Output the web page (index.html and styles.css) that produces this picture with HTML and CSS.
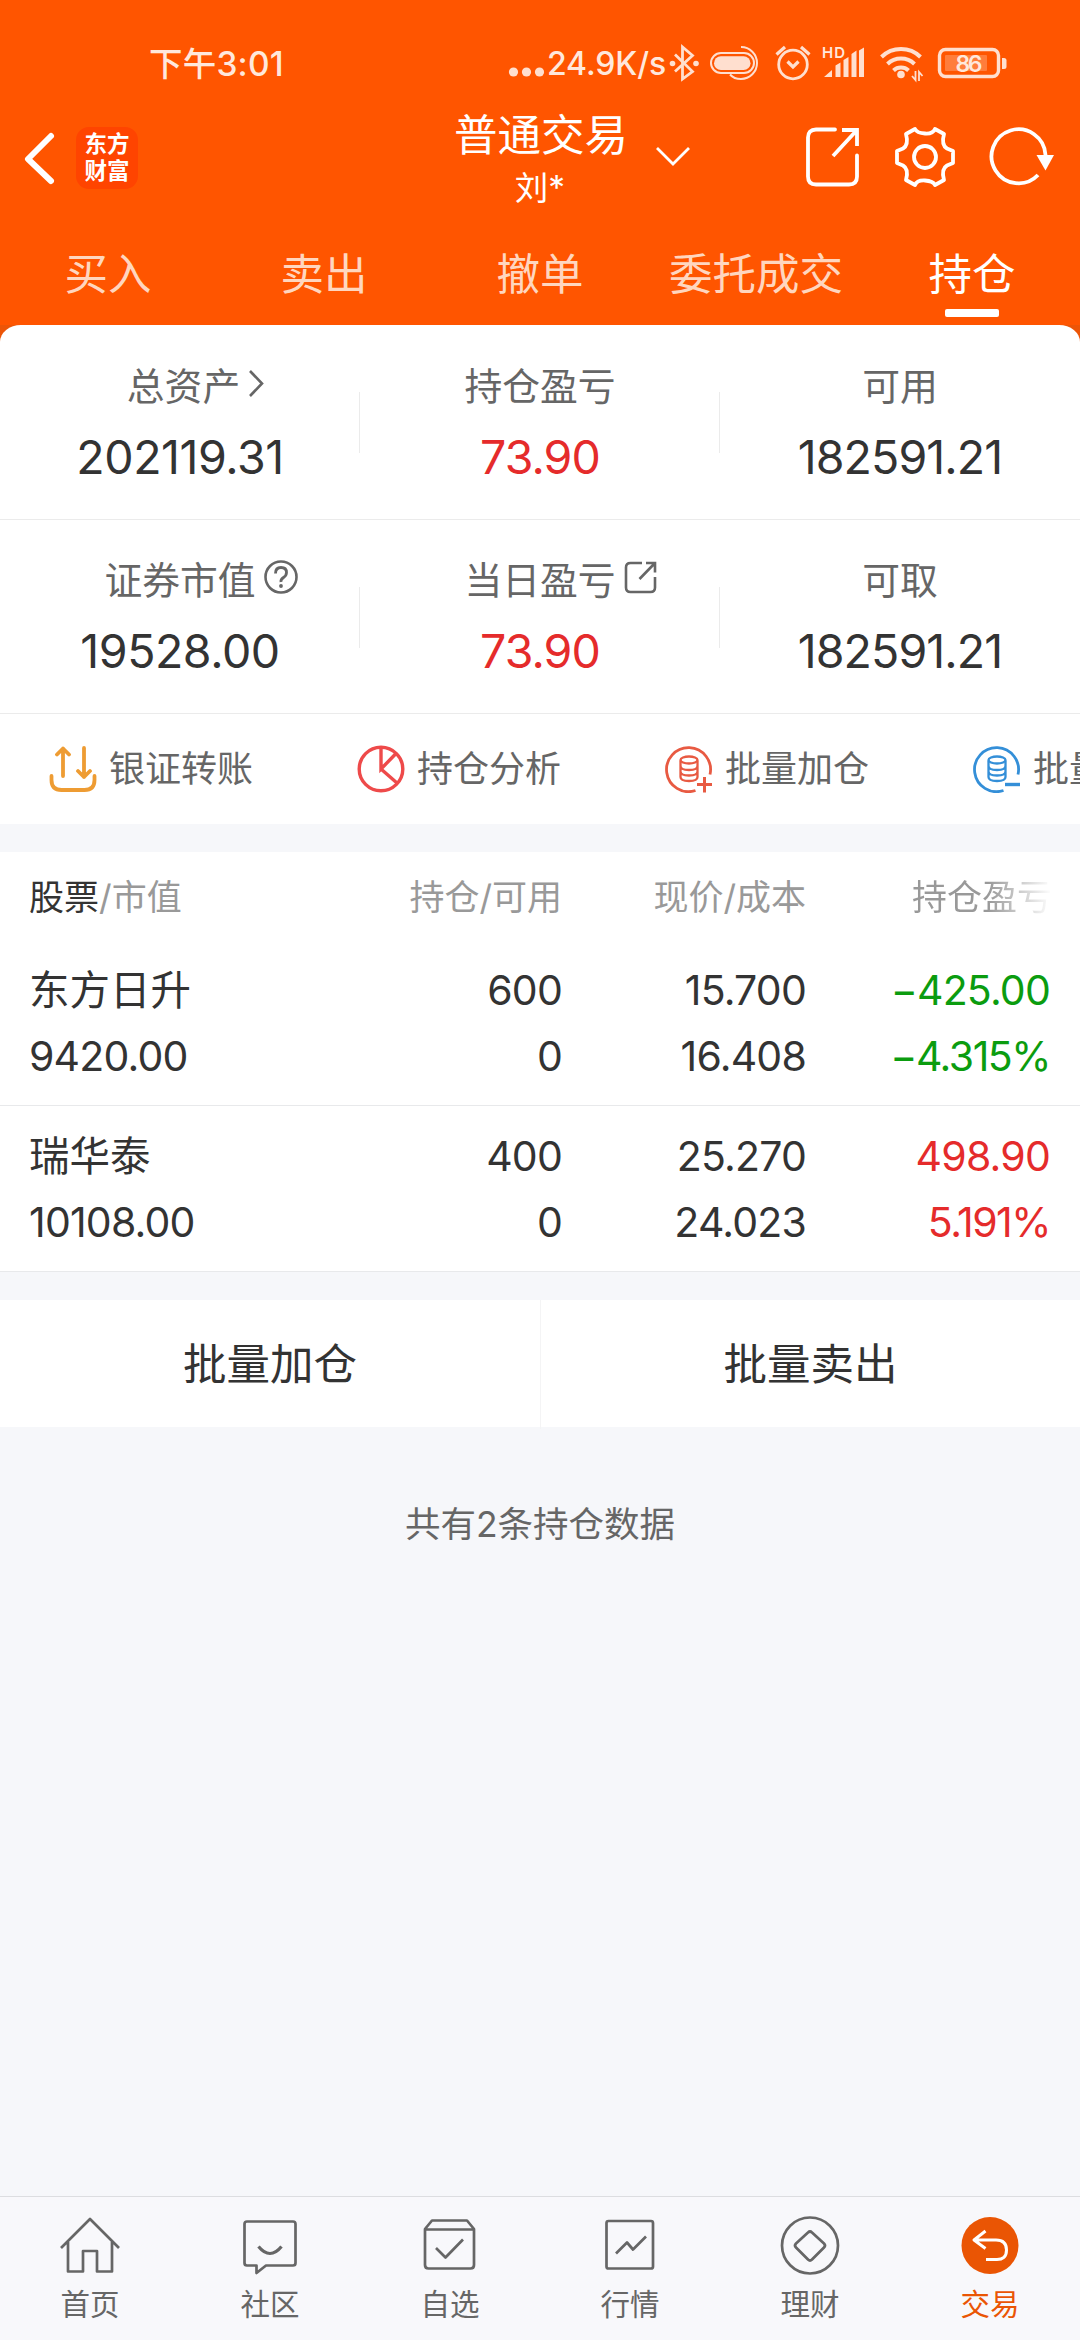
FILE: index.html
```html
<!DOCTYPE html>
<html lang="zh-CN">
<head>
<meta charset="utf-8">
<title>持仓</title>
<link rel="stylesheet" href="styles.css">
</head>
<body>
<div class="app">
  <header class="top">
    <div class="status">
      <span class="clock">下午3:01</span>
      <div class="status-right">
        <svg class="dots" width="38" height="36" viewBox="0 0 38 36" fill="#ffdfcf"><circle cx="6.500" cy="28" r="4.600"/><circle cx="19.500" cy="28" r="4.600"/><circle cx="32.500" cy="28" r="4.600"/></svg>
        <span class="speed">24.9K/s</span>
        <svg class="sys" width="344" height="40" viewBox="668 43 344 40" fill="none" stroke="#ffdfcf" stroke-width="2.800">
          <path d="M675 54.500 692.500 71.500 682.500 79V47L692.500 55.500 675 71.500"/>
          <g fill="#ffdfcf" stroke="none"><circle cx="672.500" cy="63.500" r="2.800"/><circle cx="696" cy="63.500" r="2.800"/></g>
          <rect x="711" y="53" width="43" height="20" rx="10" stroke-width="2"/>
          <rect x="714" y="56.300" width="36.500" height="13.800" rx="6.900" fill="#ffdfcf" stroke="none"/>
          <path d="M741 47a16 16 0 0 1 0 32q-7 0-11-4.500" stroke-width="2"/>
          <circle cx="793" cy="64.500" r="14.300"/>
          <path d="M776.500 54.500l8.500-7.500M809.500 54.500l-8.500-7.500M787.500 61.500l5.500 5.500 5.500-5.500" stroke-width="3.200"/>
          <g fill="#ffdfcf" stroke="none"><path d="M824 77l8-7v7zM835.500 65.500l5-3V77h-5zM843.500 60l5-3V77h-5zM851.500 54l5-3.500V77h-5zM859 50.500l5-3V77h-5z"/><circle cx="901" cy="74.500" r="3.800"/><path d="M1002 58h2q2.500 0 2.500 2.500v6q0 2.500-2.500 2.500h-2z"/><rect x="945" y="55" width="42" height="16" rx="1" fill="#ff7d3c"/></g>
          <path d="M881.500 57a28 28 0 0 1 39 0M887.500 64a19.500 19.500 0 0 1 27 0M893.500 70.500a11 11 0 0 1 15 0" stroke-width="4"/>
          <path d="M915.500 71v9l-3.500-4M919 81v-9l3.500 4" stroke-width="1.800"/>
          <rect x="939.500" y="49.500" width="59" height="27" rx="6" stroke-width="3.400"/>
          <text class="hd" x="822" y="58" textLength="23">HD</text>
          <text class="batt" x="955.500" y="72" textLength="27">86</text>
        </svg>
      </div>
    </div>
    <div class="title-bar">
      <svg class="back" width="36" height="60" viewBox="0 0 36 60" fill="none" stroke="#fff" stroke-width="6" stroke-linecap="round" stroke-linejoin="round"><path d="M31 8 8 31l23 22"/></svg>
      <div class="logo"><span>东方</span><span>财富</span></div>
      <div class="account">
        <div class="account-name">普通交易</div>
        <div class="account-user">刘*</div>
        <svg class="drop" width="36" height="22" viewBox="0 0 36 22" fill="none" stroke="#fff" stroke-width="2.800"><path d="M2 2l16 16L34 2"/></svg>
      </div>
      <div class="actions">
        <svg width="60" height="64" viewBox="0 0 60 64" fill="none" stroke="#fff" stroke-width="3.800" stroke-linecap="round"><path d="M31 4.500H12q-8 0-8 8v39q0 8 8 8h33q8 0 8-8V30.500"/><path d="M38 5h15v16M53 5 29 31" stroke-linecap="butt"/></svg>
        <svg width="64" height="64" viewBox="-32 -32 64 64" fill="none" stroke="#fff" stroke-width="3.800" stroke-linejoin="round"><circle r="11"/><path d="M-10-28Q-8-24 0-23.500T10-28L19-23Q16-12 22-8.500L28-6V6L22 8.500Q16 12 19 23L10 28Q8 24 0 23.500T-10 28L-19 23Q-16 12-22 8.500L-28 6V-6L-22-8.500Q-16-12-19-23Z"/></svg>
        <svg width="68" height="64" viewBox="0 0 68 64" fill="none" stroke="#fff" stroke-width="3.800"><path d="M52 50A27 27 0 1 1 59.500 30"/><path d="M50.500 30h17.500l-8.500 15.500z" fill="#fff" stroke="none"/></svg>
      </div>
    </div>
    <nav class="tabs">
      <span>买入</span><span>卖出</span><span>撤单</span><span>委托成交</span><span class="on">持仓</span>
    </nav>
  </header>

  <section class="summary">
    <div class="stats">
      <div class="stat"><div class="label first">总资产<svg class="hang" width="34" height="36" viewBox="0 0 34 36" fill="none" stroke="#666" stroke-width="2.600"><path d="M10 5l12 12.500L10 30"/></svg></div><div class="num">202119.31</div></div>
      <div class="stat"><div class="label">持仓盈亏</div><div class="num red">73.90</div></div>
      <div class="stat"><div class="label">可用</div><div class="num">182591.21</div></div>
    </div>
    <div class="stats">
      <div class="stat"><div class="label">证券市值<svg class="hang" width="44" height="36" viewBox="0 0 44 36" fill="none" stroke="#666" stroke-width="2.600"><circle cx="25" cy="17" r="15.500"/><path d="M19.500 13.500q0-6 5.500-6t5.500 5q0 3-3 5t-2.500 4.500" stroke-width="2.800"/><circle cx="25" cy="26" r="1.900" fill="#666" stroke="none"/></svg></div><div class="num">19528.00</div></div>
      <div class="stat"><div class="label">当日盈亏<svg class="hang" width="44" height="36" viewBox="0 0 44 36" fill="none" stroke="#666" stroke-width="2.600"><path d="M26 3H14.500Q10 3 10 7.500v20q0 4.500 4.500 4.500h20q4.500 0 4.500-4.500V17M30 3h9v9.500M39 3 23.500 19"/></svg></div><div class="num red">73.90</div></div>
      <div class="stat"><div class="label">可取</div><div class="num">182591.21</div></div>
    </div>
    <div class="shortcuts">
      <div class="shortcut"><svg width="48" height="48" viewBox="0 0 48 48" fill="none" stroke="#ee9c33" stroke-width="3.800" stroke-linecap="round" stroke-linejoin="round"><path d="M2.500 31v4q0 10 10 10h23q10 0 10-10v-4M14 31V3.500M8 9.500l6-6 6 6M35 3v29M29 26l6 6 6-6"/></svg>银证转账</div>
      <div class="shortcut"><svg width="48" height="48" viewBox="0 0 48 48" fill="none" stroke="#ee4a4a" stroke-width="3.400"><circle cx="24" cy="24" r="21.800"/><path d="M24 2v22L39 8.500M24 24l16 14"/></svg>持仓分析</div>
      <div class="shortcut"><svg width="48" height="48" viewBox="0 0 48 48" fill="none" stroke="#e85a42" stroke-width="2.800"><path d="M45 29.500A22 22 0 1 0 30.500 45.500"/><path d="M15.500 15.500v16.500q0 4 8.500 4t8.500-4V15.500M15.500 21q0 4 8.500 4t8.500-4M15.500 26.500q0 4 8.500 4t8.500-4" stroke-width="2.300"/><ellipse cx="24" cy="15" rx="8.500" ry="3.500" stroke-width="2.300"/><path d="M32 39.500h15M39.500 32v15.500" stroke-width="3"/></svg>批量加仓</div>
      <div class="shortcut"><svg width="48" height="48" viewBox="0 0 48 48" fill="none" stroke="#348fd8" stroke-width="2.800"><path d="M45 29.500A22 22 0 1 0 30.500 45.500"/><path d="M15.500 15.500v16.500q0 4 8.500 4t8.500-4V15.500M15.500 21q0 4 8.500 4t8.500-4M15.500 26.500q0 4 8.500 4t8.500-4" stroke-width="2.300"/><ellipse cx="24" cy="15" rx="8.500" ry="3.500" stroke-width="2.300"/><path d="M32 39.500h15" stroke-width="3.400"/></svg>批量卖出</div>
    </div>
  </section>

  <section class="holdings">
    <div class="head"><span><b>股票</b>/市值</span><span>持仓/可用</span><span>现价/成本</span><span class="fade">持仓盈亏</span></div>
    <div class="row"><span class="name">东方日升</span><span>600</span><span>15.700</span><span class="green">−425.00</span><span>9420.00</span><span>0</span><span>16.408</span><span class="green pct">−4.315%</span></div>
    <div class="row"><span class="name">瑞华泰</span><span>400</span><span>25.270</span><span class="red">498.90</span><span>10108.00</span><span>0</span><span>24.023</span><span class="red pct">5.191%</span></div>
  </section>

  <div class="batch"><span>批量加仓</span><span>批量卖出</span></div>
  <p class="count">共有2条持仓数据</p>

  <nav class="bottom">
    <div class="item"><svg width="64" height="64" viewBox="0 0 64 64"><path d="M3 35 32 6l29 29M10 29v29.500h15V38h14v20.500h15V29"/></svg>首页</div>
    <div class="item"><svg width="64" height="64" viewBox="0 0 64 64"><path d="M9 8.500h46q2.500 0 2.500 2.500v39q0 2.500-2.500 2.500H28L18.500 60v-7.500H9Q6.500 52.500 6.500 50V11Q6.500 8.500 9 8.500Z"/><path d="M20.500 33.500q11.500 14 23 0" stroke-width="3.200"/></svg>社区</div>
    <div class="item"><svg width="64" height="64" viewBox="0 0 64 64"><path d="M7 16l7-8.500h35l7 8.500v36q0 3.500-3.500 3.500h-42Q7 55.500 7 52ZM7 16.500h49M18 35l9.500 9.500L45 26.500"/></svg>自选</div>
    <div class="item"><svg width="64" height="64" viewBox="0 0 64 64"><rect x="8.500" y="8" width="46.500" height="47.500" rx="2"/><path d="M18 40.500 29 29.500l6 7L48 23.500"/></svg>行情</div>
    <div class="item"><svg width="64" height="64" viewBox="0 0 64 64"><circle cx="32" cy="32.500" r="28"/><path d="M30 19.500q2-2 4 0l12 11q2 2 0 4l-12 12q-2 2-4 0l-12-12q-2-2 0-4Z"/></svg>理财</div>
    <div class="item on"><svg width="64" height="64" viewBox="0 0 64 64"><circle class="disc" cx="32" cy="32.500" r="28.500"/><path class="arrow" d="M27.500 18 16 27l11.500 8.500M16 27h22q10.500 0 10.500 10T38 46.500H28"/></svg>交易</div>
  </nav>
</div>
</body>
</html>
```
FILE: styles.css
```css
* { box-sizing: border-box; }
body {
  margin: 0;
  background: #f6f7fa;
  color: #333;
  font-family: Inter, "Noto Sans CJK SC", sans-serif;
}
svg { display: block; flex: none; }
.app {
  width: 1080px;
  height: 2340px;
  display: flex;
  flex-direction: column;
  overflow: hidden;
}

/* orange header */
.top { height: 325px; background: #ff5500; color: #fff; }
.status {
  height: 108px;
  padding: 44px 68px 0 149px;
  display: flex;
  justify-content: space-between;
  align-items: flex-start;
  color: #ffe8dc;
  font-weight: 500;
}
.clock { font-size: 33.500px; line-height: 40px; letter-spacing: 0.200px; }
.status-right { display: flex; align-items: flex-start; width: 505px; }
.dots { margin-right: 2px; }
.speed { width: 121px; font-size: 32px; line-height: 40px; letter-spacing: -0.100px; }
.sys { margin-top: -1px; }
.sys text { fill: #ffe8dc; stroke: none; font-weight: 600; }
.hd { font-size: 15px; }
.batt { font-size: 23px; }

.title-bar { height: 112px; display: flex; }
.back { margin: 20px 0 0 20px; }
.logo {
  width: 62px;
  height: 62px;
  margin: 19px 0 0 20px;
  padding-top: 3px;
  border-radius: 13px;
  background: #ff4400;
  display: flex;
  flex-direction: column;
  align-items: center;
  font-weight: 700;
  font-size: 22.500px;
  line-height: 27px;
}
.account { width: 172px; margin-left: 316px; position: relative; text-align: center; }
.account-name { font-size: 43.500px; line-height: 54px; white-space: nowrap; }
.account-user { font-size: 33.500px; line-height: 50px; margin-top: 1px; }
.drop { position: absolute; left: 201px; top: 38px; }
.actions { display: flex; margin: 17px 0 0 178px; gap: 29px; }

.tabs { display: grid; grid-template-columns: repeat(5, 216px); height: 105px; }
.tabs span {
  display: flex;
  flex-direction: column;
  align-items: center;
  padding-top: 28px;
  font-size: 43.500px;
  line-height: 52px;
  color: #ffd6bf;
}
.tabs .on { color: #fff; }
.tabs .on::after { content: ""; width: 54px; height: 8px; margin-top: 9px; border-radius: 2px; background: #fff; }

/* asset summary */
.summary {
  height: 499px;
  background: linear-gradient(#ec5507 0 20px, #fff 20px);
}
.stats {
  height: 194px;
  display: grid;
  grid-template-columns: repeat(3, 360px);
  background: #fff;
  border-bottom: 1px solid #ebebeb;
}
.stats:first-child { border-radius: 21px 21px 0 0 / 17px 17px 0 0; height: 195px; }
.stat { padding-top: 38px; display: flex; flex-direction: column; align-items: center; position: relative; }
.stats + .stats .stat { padding-top: 37px; }
.stat + .stat::before { content: ""; position: absolute; left: -1px; top: 67px; width: 1px; height: 61px; background: #ebebeb; }
.label { position: relative; font-size: 37.800px; line-height: 46px; color: #666; }
.label.first { margin-left: 7px; }
.hang { position: absolute; left: 100%; top: 3px; }
.num { margin-top: 22px; font-size: 46.500px; line-height: 52px; letter-spacing: -0.900px; }
.stat:first-child .num { letter-spacing: -0.450px; }
.red { color: #e52b2b; }
.green { color: #0b9c0f; }
.shortcuts { height: 109px; padding-left: 49px; display: flex; overflow: hidden; }
.shortcut { flex: 0 0 308px; display: flex; align-items: center; gap: 12px; font-size: 36px; line-height: 46px; color: #666; white-space: nowrap; }

/* holdings table */
.holdings { margin-top: 28px; background: #fff; }
.head, .row { display: grid; grid-template-columns: 301px 232px 244px 244px; padding: 0 30px 0 29px; }
.head { height: 88px; font-size: 35px; line-height: 90px; color: #999; }
.head b { font-weight: 400; color: #333; }
.head span + span { text-align: right; }
.head .fade {
  margin-right: -2px;
  color: transparent;
  background: linear-gradient(90deg, #999 74%, #fff 100%);
  background-clip: text;
  -webkit-background-clip: text;
}
.row { height: 166px; padding-top: 17px; grid-auto-rows: 66px; font-size: 41px; line-height: 66px; letter-spacing: -0.800px; border-bottom: 1px solid #e8e9eb; }
.row span:not(:nth-child(4n + 1)) { text-align: right; }
.row .name { font-size: 40.500px; letter-spacing: 0; line-height: 68px; }
.row .pct { letter-spacing: -1.500px; }

.batch { margin-top: 28px; height: 127px; background: #fff; display: grid; grid-template-columns: 1fr 1fr; }
.batch span { text-align: center; font-size: 43.500px; line-height: 129px; }
.batch span + span { border-left: 1px solid #f4f4f5; }
.count { margin: 73px 0 0; text-align: center; font-size: 35.500px; line-height: 50px; color: #666; }

/* bottom navigation */
.bottom { margin-top: auto; height: 144px; border-top: 1px solid #dcdde0; background: #f8f8fb; display: grid; grid-template-columns: repeat(6, 180px); }
.item { display: flex; flex-direction: column; align-items: center; padding-top: 16px; gap: 7px; font-size: 29.500px; line-height: 40px; color: #666; }
.item svg { fill: none; stroke: #666; stroke-width: 2.700; stroke-linejoin: round; }
.item.on { color: #ea5504; }
.item .disc { fill: #ea5504; stroke: none; }
.item .arrow { stroke: #fff; stroke-width: 3; }
```
